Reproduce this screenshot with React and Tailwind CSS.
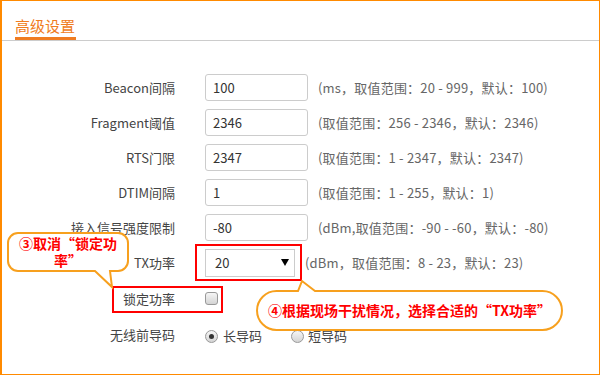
import React from "react";

const font = "font-['Noto_Sans_CJK_SC','Noto_Sans',sans-serif]";

function Row({ label, children, help }) {
  return (
    <div className="flex items-center h-[27px]">
      <div className="w-[173px] text-right text-[13px] text-[#444] leading-none whitespace-nowrap">{label}</div>
      <div className="ml-[30px] flex items-center">{children}</div>
      {help && <div className="ml-[10px] text-[13px] text-[#666] whitespace-nowrap tracking-[0.2px]">{help}</div>}
    </div>
  );
}

function Input({ value }) {
  return (
    <div className="w-[103px] h-[27px] border border-[#ccc] rounded-[3px] px-[7px] flex items-center text-[13px] text-[#333] bg-white">
      {value}
    </div>
  );
}

export default function App() {
  return (
    <div lang="zh-CN" className={`relative w-[600px] h-[375px] bg-white ${font}`}>
      <div className="w-[600px] h-[375px] border border-l-2 border-[#ff8a00] flex flex-col">
        <div className="flex border-b border-[#ccc] pt-[15px] pl-[13px]">
          <span className="block text-[15px] leading-[20px] text-[#f07c21] border-b-[3px] border-[#f07c21] pb-[1px] pr-[1px]">
            高级设置
          </span>
        </div>
        <div className="mt-[33px] flex flex-col gap-[8px]">
          <Row label="Beacon间隔" help="(ms，取值范围：20 - 999，默认：100)">
            <Input value="100" />
          </Row>
          <Row label="Fragment阈值" help="(取值范围：256 - 2346，默认：2346)">
            <Input value="2346" />
          </Row>
          <Row label="RTS门限" help="(取值范围：1 - 2347，默认：2347)">
            <Input value="2347" />
          </Row>
          <Row label="DTIM间隔" help="(取值范围：1 - 255，默认：1)">
            <Input value="1" />
          </Row>
          <Row label="接入信号强度限制" help="(dBm,取值范围：-90 - -60，默认：-80)">
            <Input value="-80" />
          </Row>
          <Row label="TX功率" help="(dBm，取值范围：8 - 23，默认：23)">
            <div className="relative">
              <div className="w-[90px] h-[28px] border border-[#ccc] bg-white flex items-center justify-between pl-[9px] pr-[5px] text-[13px] text-[#333]">
                <span>20</span>
                <svg width="8" height="7" viewBox="0 0 8 7">
                  <path d="M0,0 H8 L4,7 Z" fill="#000" />
                </svg>
              </div>
              <div className="absolute -left-[10px] -top-[5px] w-[107px] h-[37px] border-2 border-[#f00]" />
            </div>
          </Row>
        </div>
        <div className="relative mt-[9px] flex items-center h-[27px]">
          <div className="w-[173px] text-right text-[13px] text-[#444] leading-none">锁定功率</div>
          <div className="ml-[30px] w-[13px] h-[13px] rounded-[3px] border border-[#999] bg-linear-to-b from-[#f6f6f6] to-[#d4d4d4]" />
          <div className="absolute left-[110px] top-[1px] w-[111px] h-[27px] border-2 border-[#f00]" />
        </div>
        <div className="mt-[9px] flex items-center h-[27px]">
          <div className="w-[173px] text-right text-[13px] text-[#444] leading-none">无线前导码</div>
          <div className="ml-[30px] flex items-center text-[13px] text-[#444] mt-[3px]">
            <div className="w-[13px] h-[13px] rounded-full border border-[#999] bg-linear-to-b from-[#f6f6f6] to-[#d4d4d4] flex items-center justify-center">
              <div className="w-[5px] h-[5px] rounded-full bg-[#333]" />
            </div>
            <span className="ml-[5px]">长导码</span>
            <div className="ml-[29px] w-[13px] h-[13px] rounded-full border border-[#999] bg-linear-to-b from-[#f6f6f6] to-[#d4d4d4]" />
            <span className="ml-[4px]">短导码</span>
          </div>
        </div>
      </div>

      <svg className="absolute left-0 top-0 pointer-events-none" width="600" height="375" viewBox="0 0 600 375">
        <path
          d="M18,233 H118 A10,10 0 0 1 128,243 V261 A10,10 0 0 1 118,271 H110 L112,287 L95,271 H18 A10,10 0 0 1 8,261 V243 A10,10 0 0 1 18,233 Z"
          fill="#fff"
          stroke="#f7a01e"
          strokeWidth="2"
        />
        <path
          d="M276.5,291 H298 L302,281 L315,291 H542.5 A19.5,19.5 0 0 1 542.5,330 H276.5 A19.5,19.5 0 0 1 276.5,291 Z"
          fill="#fff"
          stroke="#f7a01e"
          strokeWidth="2"
        />
      </svg>
      <div className="absolute left-[8px] top-[233px] w-[120px] h-[38px] flex items-center justify-center text-center text-[14px] leading-[17px] font-bold text-[#f00]">
        <div>③取消“锁定功<br />率”</div>
      </div>
      <div className="absolute left-[257px] top-[291px] w-[305px] h-[39px] flex items-center justify-center text-[14px] font-bold text-[#f00] whitespace-nowrap">
        ④根据现场干扰情况，选择合适的“TX功率”
      </div>
    </div>
  );
}
